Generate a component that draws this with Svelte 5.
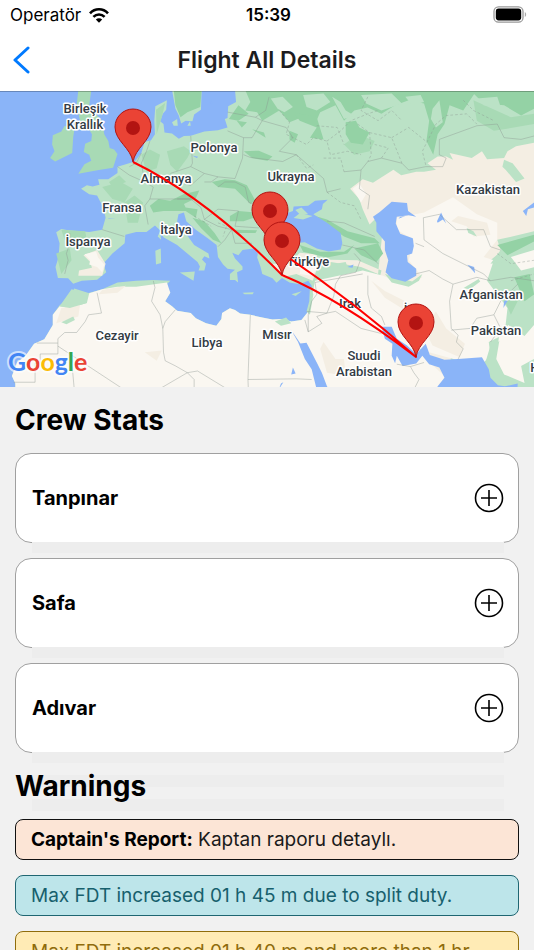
<script lang="ts">
  interface CrewMember {
    name: string
    open: boolean
  }

  let crew: CrewMember[] = $state([
    { name: "Tanpınar", open: false },
    { name: "Safa", open: false },
    { name: "Adıvar", open: false },
  ])

  const warnings = [
    { kind: "report", title: "Captain's Report:", text: "Kaptan raporu detaylı." },
    { kind: "info", title: "", text: "Max FDT increased 01 h 45 m due to split duty." },
    { kind: "caution", title: "", text: "Max FDT increased 01 h 40 m and more than 1 hr." },
  ]

  const labels = [
    { text: "Birleşik", x: 85, y: 22 },
    { text: "Krallık", x: 85, y: 38 },
    { text: "Polonya", x: 214, y: 61 },
    { text: "Almanya", x: 166, y: 92 },
    { text: "Ukrayna", x: 291, y: 90 },
    { text: "Kazakistan", x: 488, y: 103 },
    { text: "Fransa", x: 122, y: 121 },
    { text: "İtalya", x: 176, y: 143 },
    { text: "İspanya", x: 88, y: 155 },
    { text: "Türkiye", x: 308, y: 175 },
    { text: "Irak", x: 350, y: 217 },
    { text: "İran", x: 415, y: 223 },
    { text: "Afganistan", x: 491, y: 208 },
    { text: "Pakistan", x: 496, y: 244 },
    { text: "Cezayir", x: 117, y: 249 },
    { text: "Libya", x: 207, y: 256 },
    { text: "Mısır", x: 277, y: 248 },
    { text: "Suudi", x: 364, y: 269 },
    { text: "Arabistan", x: 364, y: 285 },
    { text: "Hindistan", x: 558, y: 281 },
  ]

  const stops = [
    { x: 133, y: 71 },
    { x: 270, y: 154 },
    { x: 282, y: 184 },
    { x: 416, y: 266 },
  ]

  const logo = [
    { char: "G", color: "#4285f4" },
    { char: "o", color: "#ea4335" },
    { char: "o", color: "#fbbc05" },
    { char: "g", color: "#4285f4" },
    { char: "l", color: "#34a853" },
    { char: "e", color: "#ea4335" },
  ]

  // painted in order, later shapes cover earlier ones
  const terrain = [
    // continents
    { type: "green", d: "M690 0L693 35 670 48 668 82 660 85 668 110 640 118 600 122 560 134 540 135 525 143 505 128 483 125 480 100 470 92 478 70 488 58 490 30 456 48 453 90 455 130 443 148 425 152 415 185 396 210 345 225 345 244 318 262 288 262 292 278 272 283 255 280 238 290 262 306 285 310 298 335 307 362 310 375 300 410 262 417 200 412 180 408 165 418 175 450 172 490 163 520 170 552 200 553 215 569 240 560 285 557 312 535 303 510 330 480 366 450 368 425 400 417 430 417 455 398 470 412 480 432 520 455 550 480 580 505 587 518 583 530 600 530 605 510 593 498 600 488 615 495 612 480 570 455 552 430 527 408 520 385 524 365 540 360 547 385 575 410 610 435 636 455 640 490 655 512 668 525 690 528 675 540 675 558 690 558 699 565 696 535 712 528 712 518 690 495 682 478 700 485 712 470 745 465 757 480 755 492 765 520 770 540 800 553 812 566 828 552 850 565 880 570 905 560 915 575 915 610 905 650 885 675 855 680 830 672 800 674 770 668 735 660 705 656 690 646 675 641 652 655 650 672 635 692 605 685 575 670 560 655 520 648 505 635 485 620 500 595 485 575 500 560 450 558 400 560 345 565 300 585 260 596 218 583 205 610 175 632 155 660 155 690 130 732 100 745 75 780 50 800 35 840 45 862 45 900 1568 900 1568 0Z" },
    { type: "green", d: "M505 0L515 55 525 75 532 98 545 90 565 92 570 72 590 58 592 0ZM505 95L520 85 522 105 510 105ZM558 92L560 105 550 105Z" },
    { type: "mid", d: "M230 0L225 45 235 90 258 110 270 130 268 150 250 158 246 182 262 190 268 208 248 218 230 246 290 235 332 228 345 188 335 175 322 170 318 150 306 130 300 90 276 65 262 45 268 0Z" },
    { type: "mid", d: "M155 133L185 120 215 138 212 185 162 210 147 200 160 180 153 160ZM178 125L190 105 218 118 215 138Z" },
    { type: "green", d: "M456 472L472 465 473 508 458 512ZM463 430L470 415 473 440ZM528 536L572 533 568 560ZM712 595L745 594 742 600 718 600Z" },
    // deserts and steppe
    { type: "sand", d: "M1028 290L1065 262 1095 272 1155 234 1178 250 1222 240 1245 240 1280 234 1255 215 1285 195 1310 195 1330 205 1320 185 1385 200 1415 180 1430 203 1480 200 1490 180 1515 165 1568 155 1568 420 1500 450 1440 500 1380 560 1330 600 1320 890 1110 570 1120 530 1050 500 930 498 930 482 880 478 850 510 800 510 830 550 870 540 918 560 940 500 1060 520 1110 540 1130 350 1085 395 1065 350 1055 320Z" },
    { type: "pale", d: "M925 560L1065 530 1125 545 1195 575 1240 550 1200 500 1215 440 1165 410 1165 375 1245 360 1330 315 1400 365 1460 390 1460 440 1420 490 1450 500 1430 560 1490 640 1480 730 1440 750 1425 800 1350 795 1260 770 1230 760 1250 790 1305 840 1280 900 45 900 45 862 35 840 50 800 75 780 100 745 130 732 155 690 155 660 175 635 205 640 255 625 262 597 300 585 345 578 400 578 490 565 500 595 485 620 505 635 520 648 560 655 575 670 605 685 635 692 650 672 652 655 675 641 690 646 705 656 735 660 770 668 800 674 830 672 855 680 885 675 905 650 915 610Z" },
    { type: "sand", d: "M1090 560L1130 590 1200 625 1195 650 1130 610ZM1280 650L1310 700 1365 745 1350 785 1270 750 1245 700ZM950 740L985 790 1010 790 1015 840 960 830 940 760ZM180 640L235 630 230 665 165 685ZM425 770L475 765 460 795ZM300 587L370 575 345 595 290 600ZM1345 370L1430 390 1440 425 1390 430 1370 400 1325 385Z" },
    { type: "sand", d: "M245 485L285 470 310 510 300 545 230 545 232 530 270 522 265 505Z" },
    { type: "pale", d: "M248 482L282 474 288 492 306 512 300 535 285 520 262 512 265 500ZM885 500L940 515 915 545 880 540ZM1035 290L1055 275 1075 305 1060 330Z" },
    { type: "green", d: "M210 585L255 597 255 625 205 640 175 635ZM1460 440L1568 415 1568 540 1520 560 1540 600 1568 620 1568 640 1560 680 1540 720 1500 705 1490 680 1500 640 1480 600 1520 530 1480 505 1440 510 1470 470ZM1435 740L1465 725 1455 790 1480 835 1515 840 1510 868 1465 865 1420 800 1440 780ZM1530 810L1568 790 1568 900 1520 900 1525 870 1540 860ZM1480 205L1505 215 1540 260 1515 270 1485 235 1475 225Z" },
    { type: "pale", d: "M1492 690L1540 722 1568 690 1568 790 1530 810 1540 860 1480 835 1457 790 1468 725ZM1500 490L1568 470 1568 520 1530 530Z" },
    { type: "green", d: "M1130 540L1210 562 1240 540 1230 560 1200 578 1150 565ZM807 680L840 668 855 685 825 692ZM180 682L215 665 220 675 195 688ZM1360 582L1405 555 1410 562 1380 585ZM1370 405L1390 415 1400 430 1375 420ZM910 580L920 600 910 660 900 650 908 620ZM985 510L1015 505 1020 520 990 520Z" },
    // forests
    { type: "mid", d: "M415 190L440 175 470 190 460 230 430 240ZM490 180L540 165 560 180 550 200 520 240 500 220ZM300 285L355 270 390 290 365 330 330 320ZM365 330L395 310 420 330 405 390 375 390ZM320 270L350 250 370 270 330 285ZM1010 160L1050 130 1100 150 1085 180 1040 190ZM1390 30L1500 80 1568 70 1568 100 1450 120 1400 90ZM180 410L250 415 255 440 190 440ZM1480 615L1530 600 1500 660ZM165 480L205 465 210 500 180 540ZM458 58L485 38 475 80 460 130Z" },
    { type: "forest", d: "M510 0L592 0 588 50 550 65 530 80 515 45ZM720 0L1090 0 1085 50 1040 60 1010 90 985 45 940 65 925 100 900 75 850 95 820 60 770 90 755 65 720 60 735 35ZM1020 0L1400 0 1360 60 1320 45 1305 100 1285 130 1272 190 1252 150 1260 90 1245 40 1200 30 1160 45 1120 70 1065 45ZM1380 0L1568 0 1568 55 1530 75 1480 45 1420 40Z" },
    { type: "forest", d: "M622 270L660 262 690 265 725 280 750 325 735 335 690 290 640 285ZM440 340L465 320 500 325 540 305 585 295 575 318 540 335 545 345 580 350 575 375 545 355 480 355 450 360ZM565 375L600 385 630 420 650 450 625 440 590 405ZM675 370L700 355 750 360 745 375 715 385 675 385ZM690 410L755 412 750 420 695 420ZM716 180L760 178 800 195 785 208 740 200ZM880 455L940 475 1010 475 1040 455 1020 480 960 492 890 475ZM925 370L960 380 1020 415 1100 435 1115 450 1060 450 1010 430ZM1040 465L1110 450 1125 480 1105 505 1060 485ZM1015 95L1045 90 1055 110 1085 125 1065 160 1030 155 1015 130ZM850 120L875 130 865 155 850 145ZM672 85L700 45 730 70 700 90ZM740 115L775 125 780 140ZM695 90L725 95 710 110ZM1460 455L1568 425 1568 445 1490 485ZM1510 550L1555 540 1568 600 1540 620ZM860 65L880 90 930 110 910 140 950 145 930 80Z" },
    { type: "green", d: "M795 25L830 20 860 50 835 65 815 55ZM890 15L950 10 970 35 930 60 900 50ZM1060 15L1150 10 1180 40 1120 60 1075 40ZM1270 55L1290 30 1300 95 1280 110 1265 85ZM1400 25L1460 20 1470 50 1420 45ZM975 20L1000 35 1015 60 1040 75 1010 85ZM1190 20L1235 15 1245 35 1210 45Z" },
    // seas and lakes
    { type: "water", d: "M848 360L860 355 862 342 905 340 925 325 962 322 948 335 945 350 920 365 960 390 1000 420 1005 450 1000 468 965 474 930 465 895 447 860 450 830 465 800 468 780 460 792 425 800 380Z" },
    { type: "green", d: "M862 376L880 362 918 370 890 380ZM867 352L885 345 905 365 880 365Z" },
    { type: "water", d: "M1095 372L1115 358 1150 328 1195 332 1198 355 1222 372 1200 368 1165 372 1162 392 1175 422 1212 435 1215 458 1210 480 1195 485 1197 505 1222 525 1222 545 1190 563 1150 553 1132 535 1140 500 1130 470 1130 445 1105 415 1105 390Z" },
    { type: "water", d: "M853 702L882 744 900 742 930 800 945 830 960 870 982 900 935 900 915 820 895 790 875 740Z" },
    { type: "water", d: "M1120 695L1150 695 1165 730 1195 750 1222 775 1250 745 1262 778 1305 792 1345 790 1415 785 1435 820 1440 845 1462 867 1482 870 1520 862 1518 900 1272 900 1285 870 1305 845 1290 815 1260 805 1240 780 1222 803 1182 810 1165 780 1160 802 1150 780 1152 745 1130 730Z" },
    { type: "water", d: "M1283 385L1295 360 1310 392 1300 380 1285 390ZM1535 355L1568 330 1568 345 1550 350 1545 370ZM1372 513L1395 538 1392 520ZM860 815L868 832 855 835ZM832 858L818 880 825 862ZM564 192L582 196 578 200ZM1170 378L1190 370 1175 372ZM1478 640L1492 615 1480 620ZM1020 520L1038 512 1035 522ZM316 377L340 377 320 379ZM620 28L625 45 615 35Z" },
    { type: "green", d: "M856 600L886 591 868 605Z" },
  ]

  const borders = [
    // Africa
    "M285 595L298 655 260 660 250 680 225 712 190 712 170 730 170 775 118 775 118 802 103 802 103 858 40 858M170 743L108 743M170 752L395 900M210 790L220 900M450 560L455 580 445 620 470 660 478 700 480 770 485 795 515 810 550 830 580 825 690 892M550 830L430 900M550 830L570 850 570 900M478 700L485 680 515 645M735 660L728 850 730 900M728 850L870 848 915 850",
    // Middle East
    "M895 675L905 710 945 685 930 665 960 655 985 650 1060 700 1120 715M905 710L905 660 915 620 930 600 925 565 1065 540M980 605L985 570 1000 545 1045 535 1058 500 1040 480M1080 545L1080 600 1090 640 1120 665 1130 690M900 650L960 655 980 605M1165 805L1205 812 1245 800M1205 812L1215 830 1230 850 1210 890",
    // Central Asia
    "M1220 540L1260 530 1300 555 1330 570 1320 620 1325 700 1345 720 1340 740 1360 760 1345 790M1325 705L1380 700 1400 670 1450 660 1470 620 1500 590 1520 570M1330 570L1400 550 1440 560 1420 540 1300 480 1245 440 1243 375 1290 365 1340 410 1420 410 1440 460 1470 470M1440 560L1500 550 1568 560M1245 460L1220 450M1450 660L1470 700 1440 740",
    // Europe
    "M205 420L205 450 195 480 200 500 190 540M300 410L365 430M345 225L380 250 425 270 450 285 440 320 425 340 435 395M380 225L400 215 415 185M440 150L430 180 415 215 425 270M560 135L565 215 560 225 600 245 640 255M500 245L560 225M600 245L560 280 540 275M668 120L715 140 712 200 690 260 640 255 620 270 600 270M715 190L735 198 830 210 870 190 950 260M668 65L750 80 770 90 740 140 715 140M750 80L780 60 790 20M770 90L840 110 860 140 820 180 870 190M640 285L660 270 690 270 720 285 730 330 760 340 790 400M600 380L640 350 700 355 690 400 760 405M520 320L560 320 590 345 600 380 640 400 680 410 660 440 640 460M680 410L690 450 740 450M440 320L500 320 560 320",
    "M950 260L960 300 1000 290M1010 240L1060 235 1080 210 1120 200 1180 215 1200 235 1250 225 1300 225 1310 200 1290 190 1290 145 1400 105 1460 100 1480 140 1530 145 1568 135M1060 235L1055 290 1085 310 1080 350M960 385L1010 390 1100 430M1005 455L1070 470 1110 510",
  ]

  const regionLines = [
    "M820 60L850 95 840 130 900 160 920 140 960 150 970 190 1020 180 1060 190M960 150L1000 120 1030 90 1080 70 1110 60M1050 100L1085 125 1090 190 1080 210M1085 125L1150 140 1180 215M1150 140L1200 110 1250 150M1250 220L1240 180 1280 100 1310 75 1370 70 1400 100M930 105L990 110 1010 160M870 190L900 230 920 220M1080 20L1060 60 1110 90 1150 60 1180 90M1360 30L1390 60 1450 90",
    "M950 200L1000 200 1010 240M1120 200L1140 170 1100 160M960 300L1000 330 1040 340 1060 380M640 390L665 400 655 430M570 370L620 400M1500 560L1568 540M1460 480L1500 510 1568 500",
  ]
</script>

<div class="screen">
  <div class="status-bar">
    <div class="carrier">
      <span>Operatör</span>
      <svg width="22" height="16" viewBox="0 0 22 16" aria-hidden="true">
        <path class="wave" d="M2 6.3C7 .9 15 .9 20 6.3" />
        <path class="wave" d="M5.4 9.9c3.2-3.2 8-3.2 11.2 0" />
        <path d="M7.8 12.4c1.8-1.6 4.6-1.6 6.4 0L11 15.7z" />
      </svg>
    </div>
    <time>15:39</time>
    <svg class="battery" width="34" height="17" viewBox="0 0 34 17" aria-hidden="true">
      <rect x="1" y=".8" width="29" height="15.4" rx="4.5" fill="none" stroke="#999" stroke-width="1.3" />
      <rect x="2.8" y="2.6" width="25.4" height="11.8" rx="2.8" />
      <path d="M31.8 6v5c1.8-.8 1.8-4.2 0-5z" fill="#aaa" />
    </svg>
  </div>

  <header>
    <button type="button" class="back" aria-label="Back">
      <svg width="18" height="28" viewBox="0 0 18 28" aria-hidden="true">
        <path d="M15 2L2 14l13 12" />
      </svg>
    </button>
    <h1>Flight All Details</h1>
  </header>

  <main>
    <svg class="map" viewBox="0 0 534 296" role="img" aria-label="Flight route map">
      <g transform="translate(0 -1) scale(.3406)">
        {#each terrain as shape}
          <path class={shape.type} d={shape.d} />
        {/each}
        {#each borders as d}
          <path class="border" {d} />
        {/each}
        {#each regionLines as d}
          <path class="border dashed" {d} />
        {/each}
      </g>

      {#each labels as label}
        <text class="label" x={label.x} y={label.y}>{label.text}</text>
      {/each}

      <path class="route" d="M133 71Q205 106 282 184Q340 208 416 266Q350 207 270 154" />

      {#each stops as stop}
        <g transform="translate({stop.x} {stop.y})">
          <path class="pin" d="M0 0C-2-14-18-21-18-35a18 18 0 0 1 36 0C18-21 2-14 0 0z" />
          <circle class="pin-dot" cy="-34" r="7" />
        </g>
      {/each}

      <text class="logo" x="8" y="280">
        {#each logo as letter}<tspan fill={letter.color}>{letter.char}</tspan>{/each}
      </text>
      <path d="M0 .5H534" stroke="#000" stroke-opacity=".25" />
    </svg>

    <section class="crew">
      <h2>Crew Stats</h2>
      {#each crew as member}
        <button
          type="button"
          class="crew-card"
          aria-expanded={member.open}
          onclick={() => (member.open = !member.open)}
        >
          <span>{member.name}</span>
          <svg width="30" height="30" viewBox="0 0 30 30" aria-hidden="true">
            <circle cx="15" cy="15" r="13.5" />
            <path d={member.open ? "M7 15h16" : "M7 15h16M15 7v16"} />
          </svg>
        </button>
      {/each}
    </section>

    <section class="warnings">
      <h2>Warnings</h2>
      {#each warnings as warning}
        <p class="warning {warning.kind}">
          {#if warning.title}<strong>{warning.title}</strong>{/if}
          {warning.text}
        </p>
      {/each}
    </section>
  </main>
</div>

<style>
  :global(body) {
    margin: 0;
    background: #f1f1f1;
  }

  .screen {
    display: flex;
    flex-direction: column;
    height: 100vh;
    overflow: hidden;
    font-family: Inter, "Liberation Sans", sans-serif;
    color: #000;
  }

  .status-bar {
    display: grid;
    grid-template-columns: 1fr auto 1fr;
    align-items: center;
    flex: none;
    height: 29px;
    padding: 0 7px 0 10px;
    background: #fff;
    font-size: 17px;
  }

  .carrier {
    display: flex;
    align-items: center;
    gap: 7px;
  }

  .wave {
    fill: none;
    stroke: #000;
    stroke-width: 2.6;
  }

  time {
    font-weight: 600;
  }

  .battery {
    justify-self: end;
  }

  header {
    display: grid;
    grid-template-columns: 48px 1fr 48px;
    align-items: center;
    flex: none;
    height: 62px;
    background: #fff;
  }

  .back {
    display: flex;
    padding: 0 0 0 13px;
    border: 0;
    background: none;
    cursor: pointer;
  }

  .back path {
    fill: none;
    stroke: #007aff;
    stroke-width: 3;
    stroke-linecap: round;
    stroke-linejoin: round;
  }

  h1 {
    margin: 0;
    text-align: center;
    font-size: 23px;
    font-weight: 600;
    color: #1c1c1e;
  }

  main {
    flex: 1;
    min-height: 0;
    overflow-y: auto;
    scrollbar-width: none;
  }

  .map {
    display: block;
    width: 100%;
    background: #8ab4f8;
  }

  .green {
    fill: #bbe2c6;
  }

  .mid {
    fill: #a8dab5;
  }

  .forest {
    fill: #94d2a5;
  }

  .sand {
    fill: #f4eee3;
  }

  .pale {
    fill: #faf7f1;
  }

  .water {
    fill: #8ab4f8;
  }

  .border {
    fill: none;
    stroke: #8b9490;
    stroke-opacity: 0.6;
    stroke-width: 2;
    stroke-linejoin: round;
  }

  .dashed {
    stroke-dasharray: 8 6;
  }

  .label {
    font-family: Roboto, "Liberation Sans", sans-serif;
    font-size: 13px;
    font-weight: 500;
    text-anchor: middle;
    fill: #333b44;
    stroke: #fff;
    stroke-width: 3px;
    stroke-linejoin: round;
    paint-order: stroke;
  }

  .route {
    fill: none;
    stroke: #f00;
    stroke-width: 2;
    stroke-linejoin: round;
  }

  .pin {
    fill: #ea4335;
    stroke: #b31412;
    stroke-width: 1;
  }

  .pin-dot {
    fill: #b31412;
  }

  .logo {
    font-family: Lato, "Liberation Sans", sans-serif;
    font-size: 25px;
    font-weight: 700;
    stroke: #fff;
    stroke-opacity: 0.6;
    stroke-width: 4px;
    stroke-linejoin: round;
    paint-order: stroke;
  }

  section {
    padding: 0 15px;
  }

  h2 {
    margin: 0;
    font-size: 28px;
    line-height: 34px;
    font-weight: 700;
  }

  .crew h2 {
    padding: 16px 0;
  }

  .crew-card {
    position: relative;
    display: flex;
    align-items: center;
    justify-content: space-between;
    width: 100%;
    height: 90px;
    margin-bottom: 15px;
    padding: 0 14px 0 16px;
    border: 1px solid #a0a0a0;
    border-radius: 16px;
    background: #fff;
    color: #000;
    font-family: inherit;
    font-size: 20px;
    font-weight: 700;
    cursor: pointer;
  }

  /* top edge of the folded panel */
  .crew-card::after {
    content: "";
    position: absolute;
    top: 88px;
    left: 16px;
    right: 14px;
    height: 11px;
    background: #ededed;
  }

  .crew-card svg {
    fill: none;
    stroke: #000;
    stroke-width: 1.6;
  }

  .warnings h2 {
    padding: 1px 0 16px;
    background: repeating-linear-gradient(#f1f1f1 0 7px, #ededed 7px 19px, #f1f1f1 19px 24px) 17px 0 /
      calc(100% - 32px) 100% no-repeat;
  }

  .warning {
    box-sizing: border-box;
    margin: 0 0 15px;
    padding: 7px 15px;
    border: 1px solid;
    border-radius: 8px;
    font-size: 19px;
    line-height: 25px;
  }

  .report {
    border-color: #111;
    background: #fce5d6;
    color: #1a1a1a;
  }

  .report strong {
    font-weight: 700;
    color: #000;
  }

  .info {
    border-color: #1f6672;
    background: #bde5ea;
    color: #17606d;
  }

  .caution {
    border-color: #8f6c0c;
    background: #ffebb5;
    color: #8f6c0c;
  }
</style>
